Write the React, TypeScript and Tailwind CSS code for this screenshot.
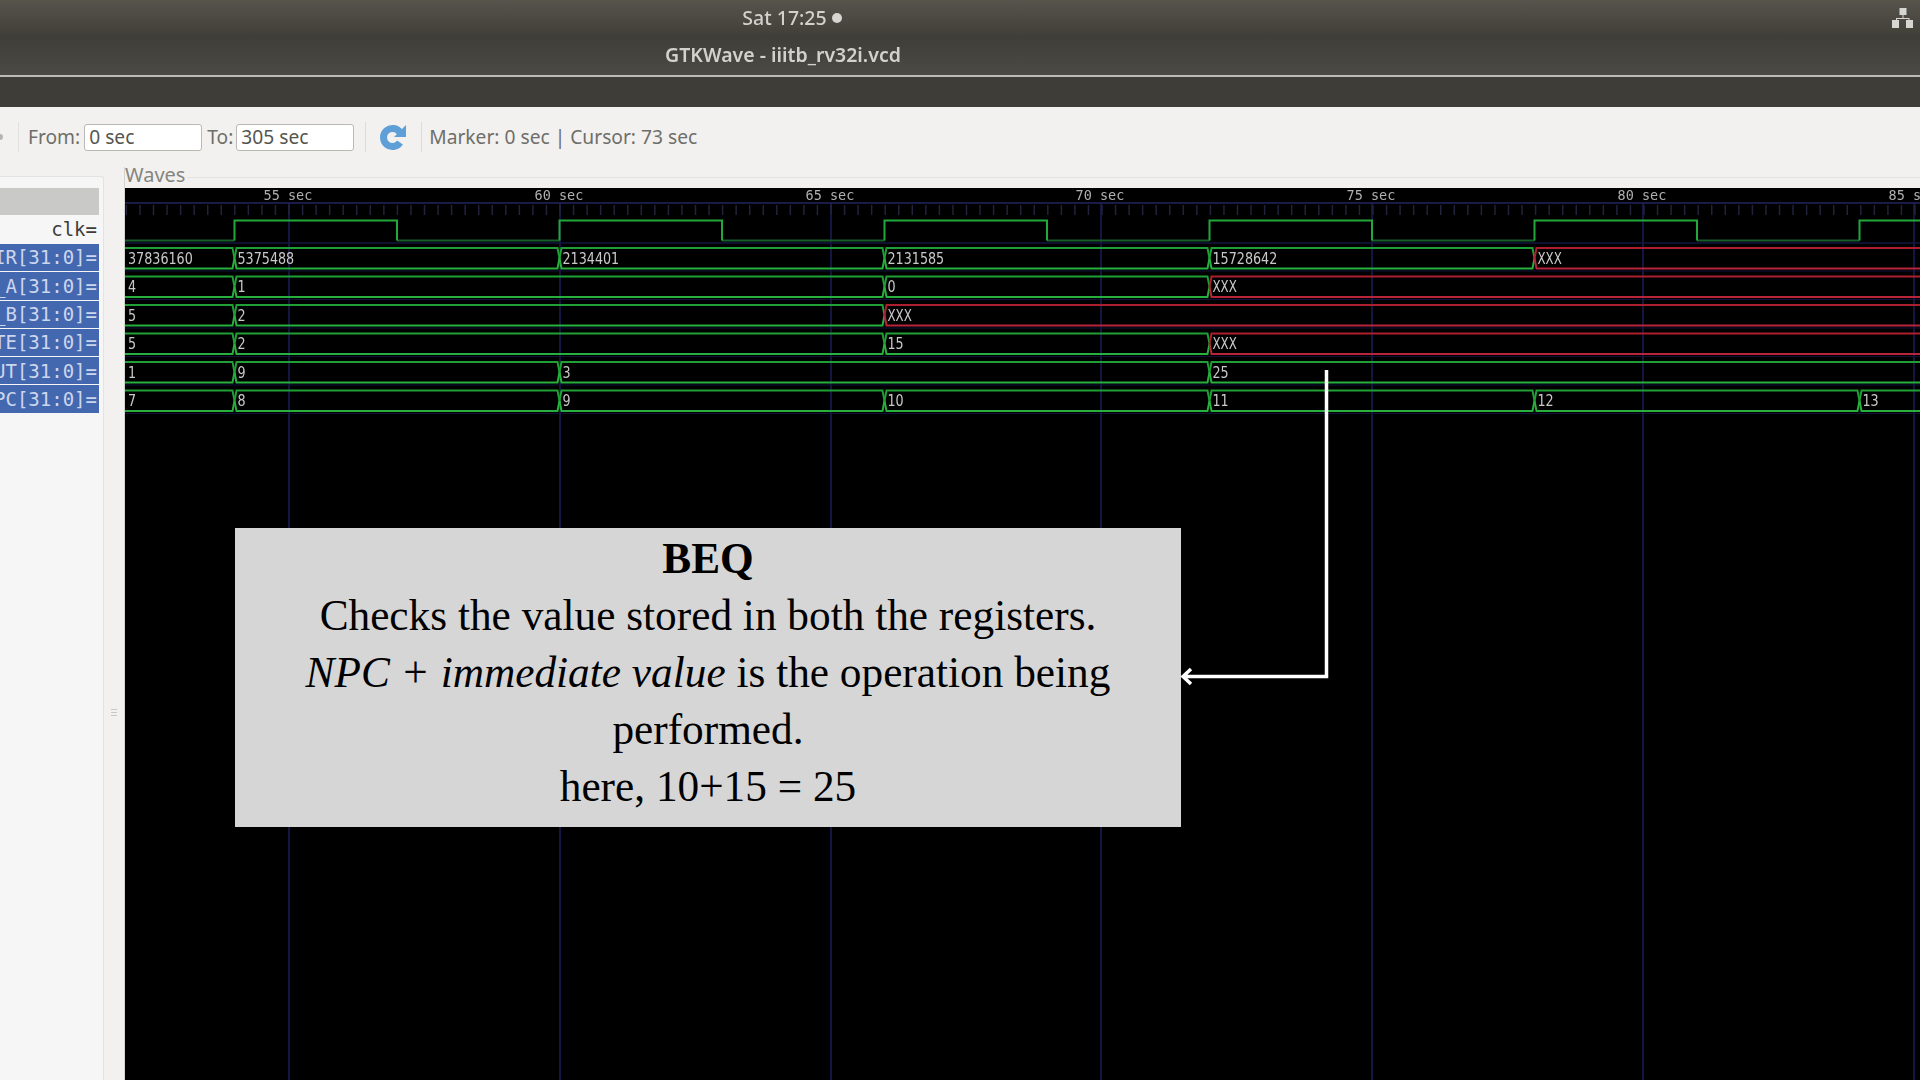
const uiFont = "font-['Noto_Sans',sans-serif]";

const GRID_X = [289, 560, 831, 1101, 1372, 1643, 1914];
const TICK_STEP = 13.55;

type Segment = { from: number; to: number; bad?: boolean; label: string };
type Row = { top: number; segments: Segment[] };

const T = [110, 234.5, 559.5, 884.5, 1209.5, 1534.5, 1859.5, 1940];

const ROWS: Row[] = [
  {
    top: 248,
    segments: [
      { from: T[0], to: T[1], label: "37836160" },
      { from: T[1], to: T[2], label: "5375488" },
      { from: T[2], to: T[3], label: "2134401" },
      { from: T[3], to: T[4], label: "2131585" },
      { from: T[4], to: T[5], label: "15728642" },
      { from: T[5], to: T[7], label: "XXX", bad: true },
    ],
  },
  {
    top: 276.5,
    segments: [
      { from: T[0], to: T[1], label: "4" },
      { from: T[1], to: T[3], label: "1" },
      { from: T[3], to: T[4], label: "0" },
      { from: T[4], to: T[7], label: "XXX", bad: true },
    ],
  },
  {
    top: 305,
    segments: [
      { from: T[0], to: T[1], label: "5" },
      { from: T[1], to: T[3], label: "2" },
      { from: T[3], to: T[7], label: "XXX", bad: true },
    ],
  },
  {
    top: 333.5,
    segments: [
      { from: T[0], to: T[1], label: "5" },
      { from: T[1], to: T[3], label: "2" },
      { from: T[3], to: T[4], label: "15" },
      { from: T[4], to: T[7], label: "XXX", bad: true },
    ],
  },
  {
    top: 362,
    segments: [
      { from: T[0], to: T[1], label: "1" },
      { from: T[1], to: T[2], label: "9" },
      { from: T[2], to: T[4], label: "3" },
      { from: T[4], to: T[7], label: "25" },
    ],
  },
  {
    top: 390.5,
    segments: [
      { from: T[0], to: T[1], label: "7" },
      { from: T[1], to: T[2], label: "8" },
      { from: T[2], to: T[3], label: "9" },
      { from: T[3], to: T[4], label: "10" },
      { from: T[4], to: T[5], label: "11" },
      { from: T[5], to: T[6], label: "12" },
      { from: T[6], to: T[7], label: "13" },
    ],
  },
];

const SIGNALS = ["IR[31:0]", "_A[31:0]", "_B[31:0]", "TE[31:0]", "UT[31:0]", "PC[31:0]"];

function BusSegment({ seg, top }: { seg: Segment; top: number }) {
  const color = seg.bad ? "#ad1f2e" : "#1f9f36";
  const bright = seg.bad ? "#b8243a" : "#27b03e";
  const h = 20.5;
  const x0 = seg.from;
  const x1 = seg.to;
  const isFirst = x0 < 126;
  return (
    <g>
      <path
        d={`M${x0} ${top + h / 2}L${x0 + 2} ${top}H${x1 - 2}L${x1} ${top + h / 2}`}
        fill="none"
        stroke={color}
        strokeWidth="2"
      />
      <path
        d={`M${x0} ${top + h / 2}L${x0 + 2} ${top + h}H${x1 - 2}L${x1} ${top + h / 2}`}
        fill="none"
        stroke={bright}
        strokeWidth="2"
      />
      <text
        x={isFirst ? 128 : x0 + 3}
        y={top + 15.5}
        fill="#c9c9c9"
        fontSize="15"
        textLength={seg.label.length * 8.1}
        lengthAdjust="spacingAndGlyphs"
        fontFamily="'DejaVu Sans', sans-serif"
      >
        {seg.label}
      </text>
    </g>
  );
}

function WavePlot() {
  const ticks: number[] = [];
  for (let x = 126 + ((289 - 126) % TICK_STEP); x < 1920; x += TICK_STEP) ticks.push(x);

  const lows: string[] = ["M110 240.5H234.5"];
  let highs = "";
  [234.5, 559.5, 884.5, 1209.5, 1534.5, 1859.5].forEach((x) => {
    highs += `M${x} 240.5V220.5H${x + 162.5}V240.5`;
    lows.push(`M${x + 162.5} 240.5H${x + 325}`);
  });

  return (
    <svg className="block blur-[0.4px]" width="1795" height="892" viewBox="125 188 1795 892">
      {GRID_X.map((x) => (
        <line key={x} x1={x} x2={x} y1={203} y2={1080} stroke="#1d1d58" strokeWidth="1.5" />
      ))}
      <line x1="125" x2="1920" y1="203" y2="203" stroke="#25255f" strokeWidth="1.5" />
      {ticks.map((x) => (
        <line key={x} x1={x} x2={x} y1={205} y2={215} stroke="#22223c" strokeWidth="1.5" />
      ))}
      {GRID_X.map((x, i) => (
        <text
          key={x}
          x={x - 25.5}
          y={199.5}
          fill="#b0b0b0"
          fontSize="13.5"
          fontFamily="'DejaVu Sans Mono', monospace"
        >
          {55 + i * 5} sec
        </text>
      ))}
      <line x1="125" x2="1920" y1="243" y2="243" stroke="#15153f" strokeWidth="1.5" />
      <path d={lows.join("")} fill="none" stroke="#155f28" strokeWidth="2" />
      <path d={highs} fill="none" stroke="#22a83a" strokeWidth="2" />
      {ROWS.map((row) => (
        <g key={row.top}>
          <line x1="125" x2="1920" y1={row.top + 23} y2={row.top + 23} stroke="#13133a" strokeWidth="1" />
          {row.segments.map((seg) => (
            <BusSegment key={seg.from} seg={seg} top={row.top} />
          ))}
        </g>
      ))}
    </svg>
  );
}

function RefreshIcon() {
  return (
    <svg width="28" height="28" viewBox="0 0 28 28" className="blur-[0.5px]">
      <path d="M21 9.500A9 9 0 1 0 21 19.500" fill="none" stroke="#5f9fd8" strokeWidth="7" />
      <path d="M27 2V14H15Z" fill="#5f9fd8" />
    </svg>
  );
}

function NetworkIcon() {
  return (
    <svg width="22" height="24" viewBox="0 0 22 24" fill="#d6d6d2">
      <rect x="7.500" y="1" width="7" height="7" />
      <rect x="0" y="13" width="7" height="8" />
      <rect x="14" y="13" width="7" height="8" />
      <path d="M10.500 8h1v3h6v3h-1v-2H5v2H4v-3h6.500z" />
    </svg>
  );
}

export default function App() {
  return (
    <div className={`relative flex h-[1080px] w-[1920px] flex-col overflow-hidden bg-[#f2f1ef] ${uiFont}`}>
      {/* window title */}
      <div className="relative h-[75px] shrink-0 bg-gradient-to-b from-[#57544c] via-[#3f3e38] to-[#4b4a45] text-[#d2d1cc]">
        <div className="flex h-[34px] w-[1584px] items-center justify-center gap-[5px] pt-[1px] text-[19.500px] font-medium blur-[0.3px]">
          <span>Sat 17:25</span>
          <span className="h-[10px] w-[10px] rounded-full bg-[#d6d5d0]" />
        </div>
        <div className="mt-[7px] w-[1566px] text-center text-[19.500px] leading-[28px] font-semibold blur-[0.3px]">
          GTKWave - iiitb_rv32i.vcd
        </div>
        <div className="absolute right-[6px] top-[7px]">
          <NetworkIcon />
        </div>
      </div>
      <div className="h-[2px] shrink-0 bg-[#bdbcb6]" />
      <div className="h-[30px] shrink-0 bg-[#3e3d38]" />

      {/* toolbar */}
      <div className="flex h-[60px] shrink-0 items-center text-[19.200px] text-[#6e6e6a]">
        <div className="h-[6px] w-[3px] rounded-r-full bg-[#b5b5b2]" />
        <div className="ml-[15px] h-[30px] w-px bg-[#e2e1dd]" />
        <span className="ml-[9px]">From:</span>
        <div className="ml-[4px] flex h-[27px] w-[118px] items-center rounded-[3px] border border-[#b9b8b3] bg-white px-[4px] text-[#55554f]">
          0 sec
        </div>
        <span className="ml-[5px]">To:</span>
        <div className="ml-[3px] flex h-[27px] w-[118px] items-center rounded-[3px] border border-[#b9b8b3] bg-white px-[4px] text-[#55554f]">
          305 sec
        </div>
        <div className="ml-[11px] h-[30px] w-px bg-[#dcdbd7]" />
        <div className="ml-[11px] flex w-[32px] justify-center">
          <RefreshIcon />
        </div>
        <div className="ml-[12px] h-[30px] w-px bg-[#dcdbd7]" />
        <span className="ml-[7px]">Marker: 0 sec | Cursor: 73 sec</span>
      </div>

      <div className="flex min-h-0 flex-1">
        {/* signals panel */}
        <div className="mt-[9px] flex w-[104px] shrink-0 flex-col rounded-tr-[3px] border-t border-r border-[#e4e3df] bg-[#f6f6f6] pt-[11px]">
          <div className="h-[27px] w-[99px] bg-[#c9c9c7]" />
          <div className="flex h-[29px] w-[99px] items-center justify-end pr-[2px] font-['DejaVu_Sans_Mono',monospace] text-[19px] text-[#3c3c3c]">
            clk=
          </div>
          {SIGNALS.map((name) => (
            <div
              key={name}
              className="mb-px flex h-[27.300px] w-[99px] items-center justify-end overflow-hidden whitespace-nowrap bg-[#4468b0] pr-[2px] font-['DejaVu_Sans_Mono',monospace] text-[19px] text-[#ccd6ec]"
            >
              {name}=
            </div>
          ))}
        </div>

        {/* pane handle */}
        <div className="flex w-[21px] shrink-0 items-center justify-center border-r border-[#d5d4d0]">
          <div className="mt-[178px] flex flex-col gap-[2px]">
            <div className="h-px w-[6px] bg-[#c9c8c4]" />
            <div className="h-px w-[6px] bg-[#c9c8c4]" />
            <div className="h-px w-[6px] bg-[#c9c8c4]" />
          </div>
        </div>

        {/* waves */}
        <div className="flex min-w-0 flex-1 flex-col">
          <div className="flex h-[21px] items-center">
            <span className="mb-[7px] text-[20px] leading-[21px] text-[#85857f]">Waves</span>
            <div className="ml-[2px] h-px flex-1 bg-[#e4e3df]" />
          </div>
          <div className="flex-1 overflow-hidden bg-black">
            <WavePlot />
          </div>
        </div>
      </div>

      {/* annotation */}
      <div className="absolute left-[235px] top-[528px] flex h-[299px] w-[946px] flex-col items-center justify-center bg-[#d6d6d6] px-[50px] pb-[11px] text-center font-['Liberation_Serif',serif] text-[43.300px] leading-[57px] text-black">
        <div className="font-bold">BEQ</div>
        <div className="whitespace-nowrap">Checks the value stored in both the registers.</div>
        <div>
          <i>NPC + immediate value</i> is the operation being performed.
        </div>
        <div>here, 10+15 = 25</div>
      </div>
      <svg className="absolute left-[1180px] top-[368px]" width="150" height="320" viewBox="0 0 150 320">
        <path d="M146.500 2V308.500H4M11 301L3 308.500L11 316" fill="none" stroke="white" strokeWidth="3.500" />
      </svg>
    </div>
  );
}
